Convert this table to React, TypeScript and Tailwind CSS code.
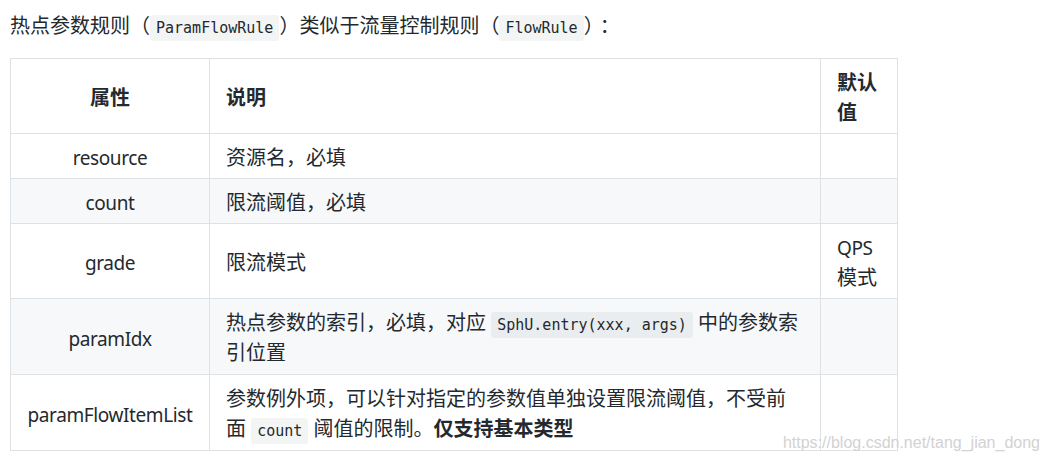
import React from "react";

const code =
  "font-['DejaVu_Sans_Mono',monospace] text-[15px] leading-[18px] bg-[rgba(27,31,35,0.05)] rounded-[3px] px-[6px] py-[4px]";

const latin = "font-['Noto_Sans',sans-serif] text-[19px] tracking-[-0.4px]";

const cell = "border border-[#dfe2e5] px-[16px] pt-[9px] pb-[5px]";
const cellCode = "border border-[#dfe2e5] px-[16px] pt-[9px] pb-[6px]";

export default function App() {
  return (
    <div className="relative w-[1044px] h-[463px] overflow-hidden bg-white text-[#24292e] font-['Noto_Sans','Noto_Sans_CJK_SC',sans-serif] text-[20px]">
      <p className="pl-[10px] pt-[11px] leading-[30px] whitespace-nowrap">
        热点参数规则（<code className={code}>ParamFlowRule</code>）类似于流量控制规则（<code className={code}>FlowRule</code>）<span className="pl-[6px]">：</span>
      </p>
      <table className="mt-[17px] ml-[10px] w-[887px] table-fixed border-collapse leading-[30px]">
        <colgroup>
          <col className="w-[199px]" />
          <col className="w-[611px]" />
          <col className="w-[77px]" />
        </colgroup>
        <thead>
          <tr className="bg-white">
            <th className={`${cell} text-center font-bold`}>属性</th>
            <th className={`${cell} text-left font-bold`}>说明</th>
            <th className={`${cell} text-left font-bold`}>默认值</th>
          </tr>
        </thead>
        <tbody>
          <tr className="bg-white">
            <td className={`${cell} text-center`}>
              <span className={latin}>resource</span>
            </td>
            <td className={cell}>资源名，必填</td>
            <td className={cell}></td>
          </tr>
          <tr className="bg-[#f6f8fa]">
            <td className={`${cell} text-center`}>
              <span className={latin}>count</span>
            </td>
            <td className={cell}>限流阈值，必填</td>
            <td className={cell}></td>
          </tr>
          <tr className="bg-white">
            <td className={`${cell} text-center`}>
              <span className={latin}>grade</span>
            </td>
            <td className={cell}>限流模式</td>
            <td className={cell}>
              <span className={latin}>QPS</span> 模式
            </td>
          </tr>
          <tr className="bg-[#f6f8fa]">
            <td className={`${cell} text-center`}>
              <span className={latin}>paramIdx</span>
            </td>
            <td className={cellCode}>
              <span className="whitespace-nowrap">
                热点参数的索引，必填，对应 <code className={code}>SphU.entry(xxx, args)</code> 中的参数索
              </span>
              <br />
              引位置
            </td>
            <td className={cell}></td>
          </tr>
          <tr className="bg-white">
            <td className={`${cell} text-center`}>
              <span className={latin}>paramFlowItemList</span>
            </td>
            <td className={cellCode}>
              <span className="whitespace-nowrap">参数例外项，可以针对指定的参数值单独设置限流阈值，不受前</span>
              <br />
              <span className="whitespace-nowrap">
                面 <code className={code}>count</code> 阈值的限制。<strong className="font-bold">仅支持基本类型</strong>
              </span>
            </td>
            <td className={cell}></td>
          </tr>
        </tbody>
      </table>
      <div className="absolute right-[4px] top-[433px] text-[16px] leading-[20px] text-[#d2d2d2] font-['Liberation_Sans',sans-serif]">
        https://blog.csdn.net/tang_jian_dong
      </div>
    </div>
  );
}
